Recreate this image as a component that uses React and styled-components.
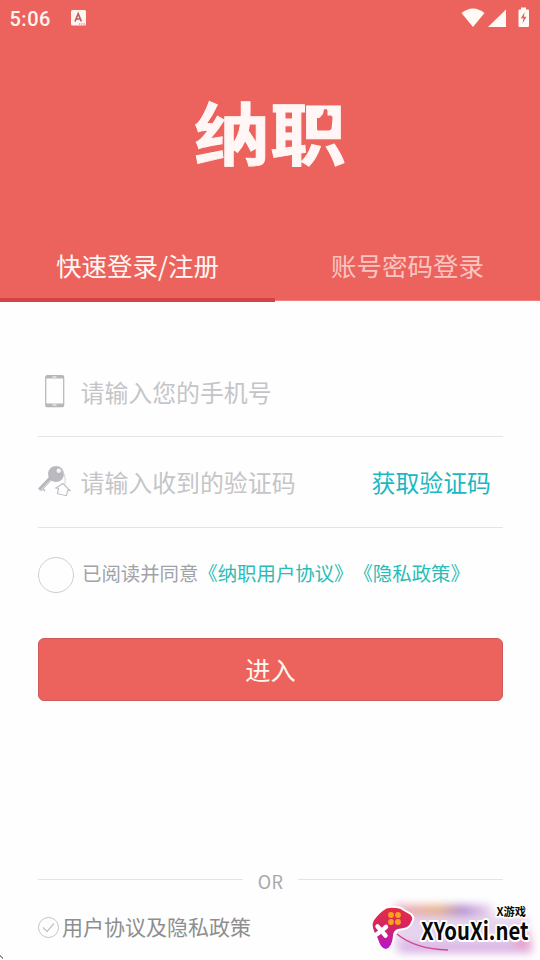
import React from "react";
import styled, { createGlobalStyle } from "styled-components";

const Global = createGlobalStyle`
  * { box-sizing: border-box; }
  body { margin: 0; background: #fff; font-family: "Noto Sans CJK SC", sans-serif; }
`;

const Screen = styled.div`
  width: 540px;
  height: 960px;
  overflow: hidden;
  position: relative;
  display: flex;
  flex-direction: column;
  background: #fefefe;
`;

const Header = styled.header`
  height: 301px;
  flex: none;
  display: flex;
  flex-direction: column;
  background: #ec635d;
  border-bottom: 1px solid #ef807b;
`;

const StatusBar = styled.div`
  height: 36px;
  padding: 0 9px 0 9.5px;
  display: flex;
  align-items: center;
  color: #fff4ef;
`;

const Clock = styled.span`
  width: 61px;
  font: 500 20px/36px Roboto, sans-serif;
  padding-top: 1px;
  letter-spacing: 0.5px;
`;

const StatusIcons = styled.div`
  margin-left: auto;
  display: flex;
`;

const Brand = styled.h1`
  margin: 59px 0 0;
  height: 80px;
  align-self: center;
  position: relative;
  color: #fff6f5;
  font-size: 76px;
  line-height: 80px;
  font-weight: 700;
  white-space: nowrap;
`;

const BrandText = styled.span`
  display: block;
  transform: translateY(-4.5px) scaleY(0.9);
  -webkit-text-stroke: 1px #fff6f5;
`;

const BrandThumb = styled.svg`
  position: absolute;
  left: 119px;
  top: 12px;
`;

const Tabs = styled.nav`
  margin-top: auto;
  height: 68px;
  flex: none;
  display: grid;
  grid-template-columns: 275px 265px;
`;

const Tab = styled.button`
  border: 0;
  padding: 0 0 1px;
  height: 70px;
  background: none;
  font: 400 25.5px/65px "Noto Sans CJK SC", sans-serif;
  color: ${(p) => (p.$active ? "#fff7f3" : "#f9c5c1")};
  border-bottom: ${(p) => (p.$active ? "4px solid #d64344" : "4px solid transparent")};
`;

const Form = styled.main`
  padding: 46px 37px 0 38px;
  display: flex;
  flex-direction: column;
`;

const Field = styled.div`
  height: ${(p) => p.$height}px;
  display: flex;
  align-items: center;
  border-bottom: 1px solid #e4e4e5;
`;

const FieldIcon = styled.span`
  width: 42.5px;
  height: 36px;
  flex: none;
`;

const Placeholder = styled.span`
  flex: 1;
  color: #c5c5c8;
  font-size: 23.9px;
  line-height: 36px;
`;

const CodeLink = styled.span`
  padding-right: 12px;
  color: #1bb8c1;
  font-size: 23.9px;
  line-height: 36px;
`;

const Agreement = styled.div`
  margin-top: 29px;
  height: 36px;
  display: flex;
  color: #a1a3a8;
  font-size: 19.4px;
  line-height: 31px;
  white-space: nowrap;
`;

const Radio = styled.span`
  width: 36px;
  height: 36px;
  margin-right: 8px;
  border: 1px solid #cfcfd2;
  border-radius: 50%;
`;

const Policy = styled.span`
  color: #2cbcb7;
`;

const Submit = styled.button`
  margin-top: 45px;
  height: 63px;
  padding: 0 0 2px;
  border: 1px solid #cf5b59;
  border-radius: 6px;
  background: #ec635d;
  color: #fff6ee;
  font: 400 25.2px/58px "Noto Sans CJK SC", sans-serif;
`;

const Footer = styled.footer`
  margin: auto 37px 17px 38px;
`;

const Divider = styled.div`
  height: 24px;
  display: flex;
  gap: 15px;
  color: #a9a9ab;
  font-size: 18px;
  line-height: 26px;
  letter-spacing: 0.3px;
`;

const Rule = styled.span`
  flex: 1;
  height: 1px;
  margin-top: 11px;
  background: #e4e4e5;
`;

const Terms = styled.div`
  margin-top: 19px;
  height: 32px;
  display: flex;
  align-items: center;
  gap: 3px;
  color: #8e8e8f;
  font-size: 21px;
  line-height: 32px;
`;

const TermsText = styled.span`
  height: 34px;
`;

const Watermark = styled.svg`
  position: absolute;
  left: 360px;
  top: 890px;
`;

const Corner = styled.svg`
  position: absolute;
  left: 0;
  bottom: 0;
`;

function ThumbMark() {
  return (
    <BrandThumb width="22" height="26" viewBox="313 107 22 26">
      <path d="M313.500 110h20v22h-20Z" fill="#fff6f5" />
      <path d="M317 118h2.500l3.500-4 1-4.500q2.500-1.500 3.500 1v5h3.500q2 1 1.500 3l-1 10q-.5 2-3 2h-10q-1.500 0-1.500-1.500Z" fill="#ec635d" />
    </BrandThumb>
  );
}

function AppBadge() {
  return (
    <svg width="15" height="16" viewBox="0 0 15 16">
      <rect width="15" height="15.5" rx="1.5" fill="#fff4ef" />
      <path d="M4 11.5 7.2 3.7 10.4 11.5M5.2 9h4" fill="none" stroke="#b9605d" strokeWidth="1.6" />
      <path d="M8 14h1.2M10.3 14h1.2M12.6 14h1.2" stroke="#d9605d" strokeWidth="1.2" />
    </svg>
  );
}

function SignalIcons() {
  return (
    <svg width="72" height="26" viewBox="460 5 72 26">
      <path d="M462.500 13Q474 4 485.500 13L474 27Z" fill="#fffaf5" />
      <path d="M507 9.500V27H489Z" fill="#fffaf5" />
      <path d="M520.500 9.500h1.500V7.500h5v2h2a1 1 0 0 1 1 1V26a1 1 0 0 1-1 1h-8.500a1 1 0 0 1-1-1V10.500a1 1 0 0 1 1-1Z" fill="#fffaf5" />
      <path d="m525.800 12-4 6.300h2.700l-1 5.200 4-6.700h-2.700Z" fill="#df625e" />
    </svg>
  );
}

function PhoneIcon() {
  return (
    <svg width="43" height="36" viewBox="38 374 43 36" fill="none">
      <rect x="45.700" y="375.700" width="18" height="31" rx="2" stroke="#b5b5b8" strokeWidth="1.200" />
      <path d="M46 377h17.500M46 405h17.500" stroke="#b8b8bb" strokeWidth="2.800" />
      <path d="M52.500 377h4M52.500 405h4" stroke="#fff" strokeWidth="1" />
    </svg>
  );
}

function KeyIcon() {
  return (
    <svg width="43" height="36" viewBox="38 464 43 36" fill="none">
      <circle cx="56" cy="474" r="8" fill="#b9b9bf" />
      <path d="M51 478 39.500 490" stroke="#b5b5bb" strokeWidth="4" />
      <path d="m50.500 480-11 11.500" stroke="#ededf0" strokeWidth=".8" />
      <path d="m43 489 2 2" stroke="#b5b5bb" strokeWidth="1.500" />
      <circle cx="58.700" cy="470.800" r="2.200" fill="#f5f5f6" />
      <path d="M61 470q5 3 4 14" stroke="#cfcfd2" strokeWidth=".9" />
      <path d="m56 488 7-4.500 7 7-2.200-.2-1.500 5.400-8.800-2 1-5.300Z" stroke="#bdbdc1" strokeWidth="1.100" />
    </svg>
  );
}

function CheckIcon() {
  return (
    <svg width="21" height="22" viewBox="0 0 21 22" fill="none" stroke="#c3c3c4" strokeWidth="1">
      <circle cx="10.500" cy="11.500" r="10" />
      <path d="m5 11.500 4 4 7-8" strokeWidth="1.200" />
    </svg>
  );
}

function SiteMark() {
  return (
    <Watermark width="180" height="70" viewBox="360 890 180 70">
      <defs>
        <filter id="soft" x="-20%" y="-50%" width="140%" height="200%">
          <feGaussianBlur stdDeviation="4" />
        </filter>
        <linearGradient id="pad" x1="0" y1="0" x2="0" y2="1">
          <stop offset="0" stopColor="#e62c43" />
          <stop offset=".5" stopColor="#d32465" />
          <stop offset="1" stopColor="#b314dc" />
        </linearGradient>
        <linearGradient id="glow">
          <stop offset="0" stopColor="#e5a9ce" />
          <stop offset=".45" stopColor="#e6b084" />
          <stop offset=".7" stopColor="#b08ad0" />
          <stop offset="1" stopColor="#efd6ee" />
        </linearGradient>
      </defs>
      <g filter="url(#soft)">
        <rect x="394" y="905" width="98" height="13" fill="url(#glow)" />
        <rect x="395" y="916" width="133" height="36" fill="#e6d4ee" />
        <rect x="400" y="943" width="132" height="10" fill="#d8b0e5" />
        <rect x="515" y="932" width="15" height="18" fill="#e8a4ca" />
      </g>
      <path d="M397 934q18 15 51 16" fill="none" stroke="#d5478e" strokeWidth="1.600" />
      <path d="M384 909q3-3 12-2 5 0 8 3l7 4q4 4 1 8-2 6-8 7l-6 1q-4 2-4 6-1 12-8 14-6 0-9-11-8-13-4-19 6-8 11-11Z" fill="url(#pad)" stroke="#fff" strokeWidth="2" />
      <g fill="#f9a21a">
        <circle cx="391" cy="915" r="2.900" /><circle cx="398" cy="915" r="2.900" />
        <circle cx="391" cy="922" r="2.900" /><circle cx="398" cy="922" r="2.900" />
      </g>
      <path d="m377.500 926.500 8 9m.5-8.500-9.500 7.500" stroke="#fff" strokeWidth="4.500" strokeLinecap="round" />
      <g fontFamily="Noto Sans CJK SC, sans-serif" fontWeight="700" fill="#080808" stroke="#fff" strokeLinejoin="round" paintOrder="stroke">
        <text x="421" y="940" fontSize="24" strokeWidth="4" textLength="107.500" lengthAdjust="spacingAndGlyphs">XYouXi.net</text>
        <text x="496.500" y="916" fontSize="11" strokeWidth="3" textLength="29.500" lengthAdjust="spacingAndGlyphs">X游戏</text>
      </g>
    </Watermark>
  );
}

export default function App() {
  return (
    <Screen>
      <Global />
      <Header>
        <StatusBar>
          <Clock>5:06</Clock>
          <AppBadge />
          <StatusIcons><SignalIcons /></StatusIcons>
        </StatusBar>
        <Brand>
          <BrandText>纳职</BrandText>
          <ThumbMark />
        </Brand>
        <Tabs>
          <Tab $active>快速登录/注册</Tab>
          <Tab>账号密码登录</Tab>
        </Tabs>
      </Header>
      <Form>
        <Field $height={90}>
          <FieldIcon><PhoneIcon /></FieldIcon>
          <Placeholder>请输入您的手机号</Placeholder>
        </Field>
        <Field $height={91}>
          <FieldIcon><KeyIcon /></FieldIcon>
          <Placeholder>请输入收到的验证码</Placeholder>
          <CodeLink>获取验证码</CodeLink>
        </Field>
        <Agreement>
          <Radio />
          <span>已阅读并同意</span>
          <Policy>《纳职用户协议》</Policy>
          <Policy>《隐私政策》</Policy>
        </Agreement>
        <Submit>进入</Submit>
      </Form>
      <Footer>
        <Divider><Rule />OR<Rule /></Divider>
        <Terms><CheckIcon /><TermsText>用户协议及隐私政策</TermsText></Terms>
      </Footer>
      <SiteMark />
      <Corner width="5" height="5"><path d="M0 .5h1v1H0ZM1 1.500h1v1H1ZM2 2.500h1v1H2Z" fill="#222" /></Corner>
    </Screen>
  );
}
